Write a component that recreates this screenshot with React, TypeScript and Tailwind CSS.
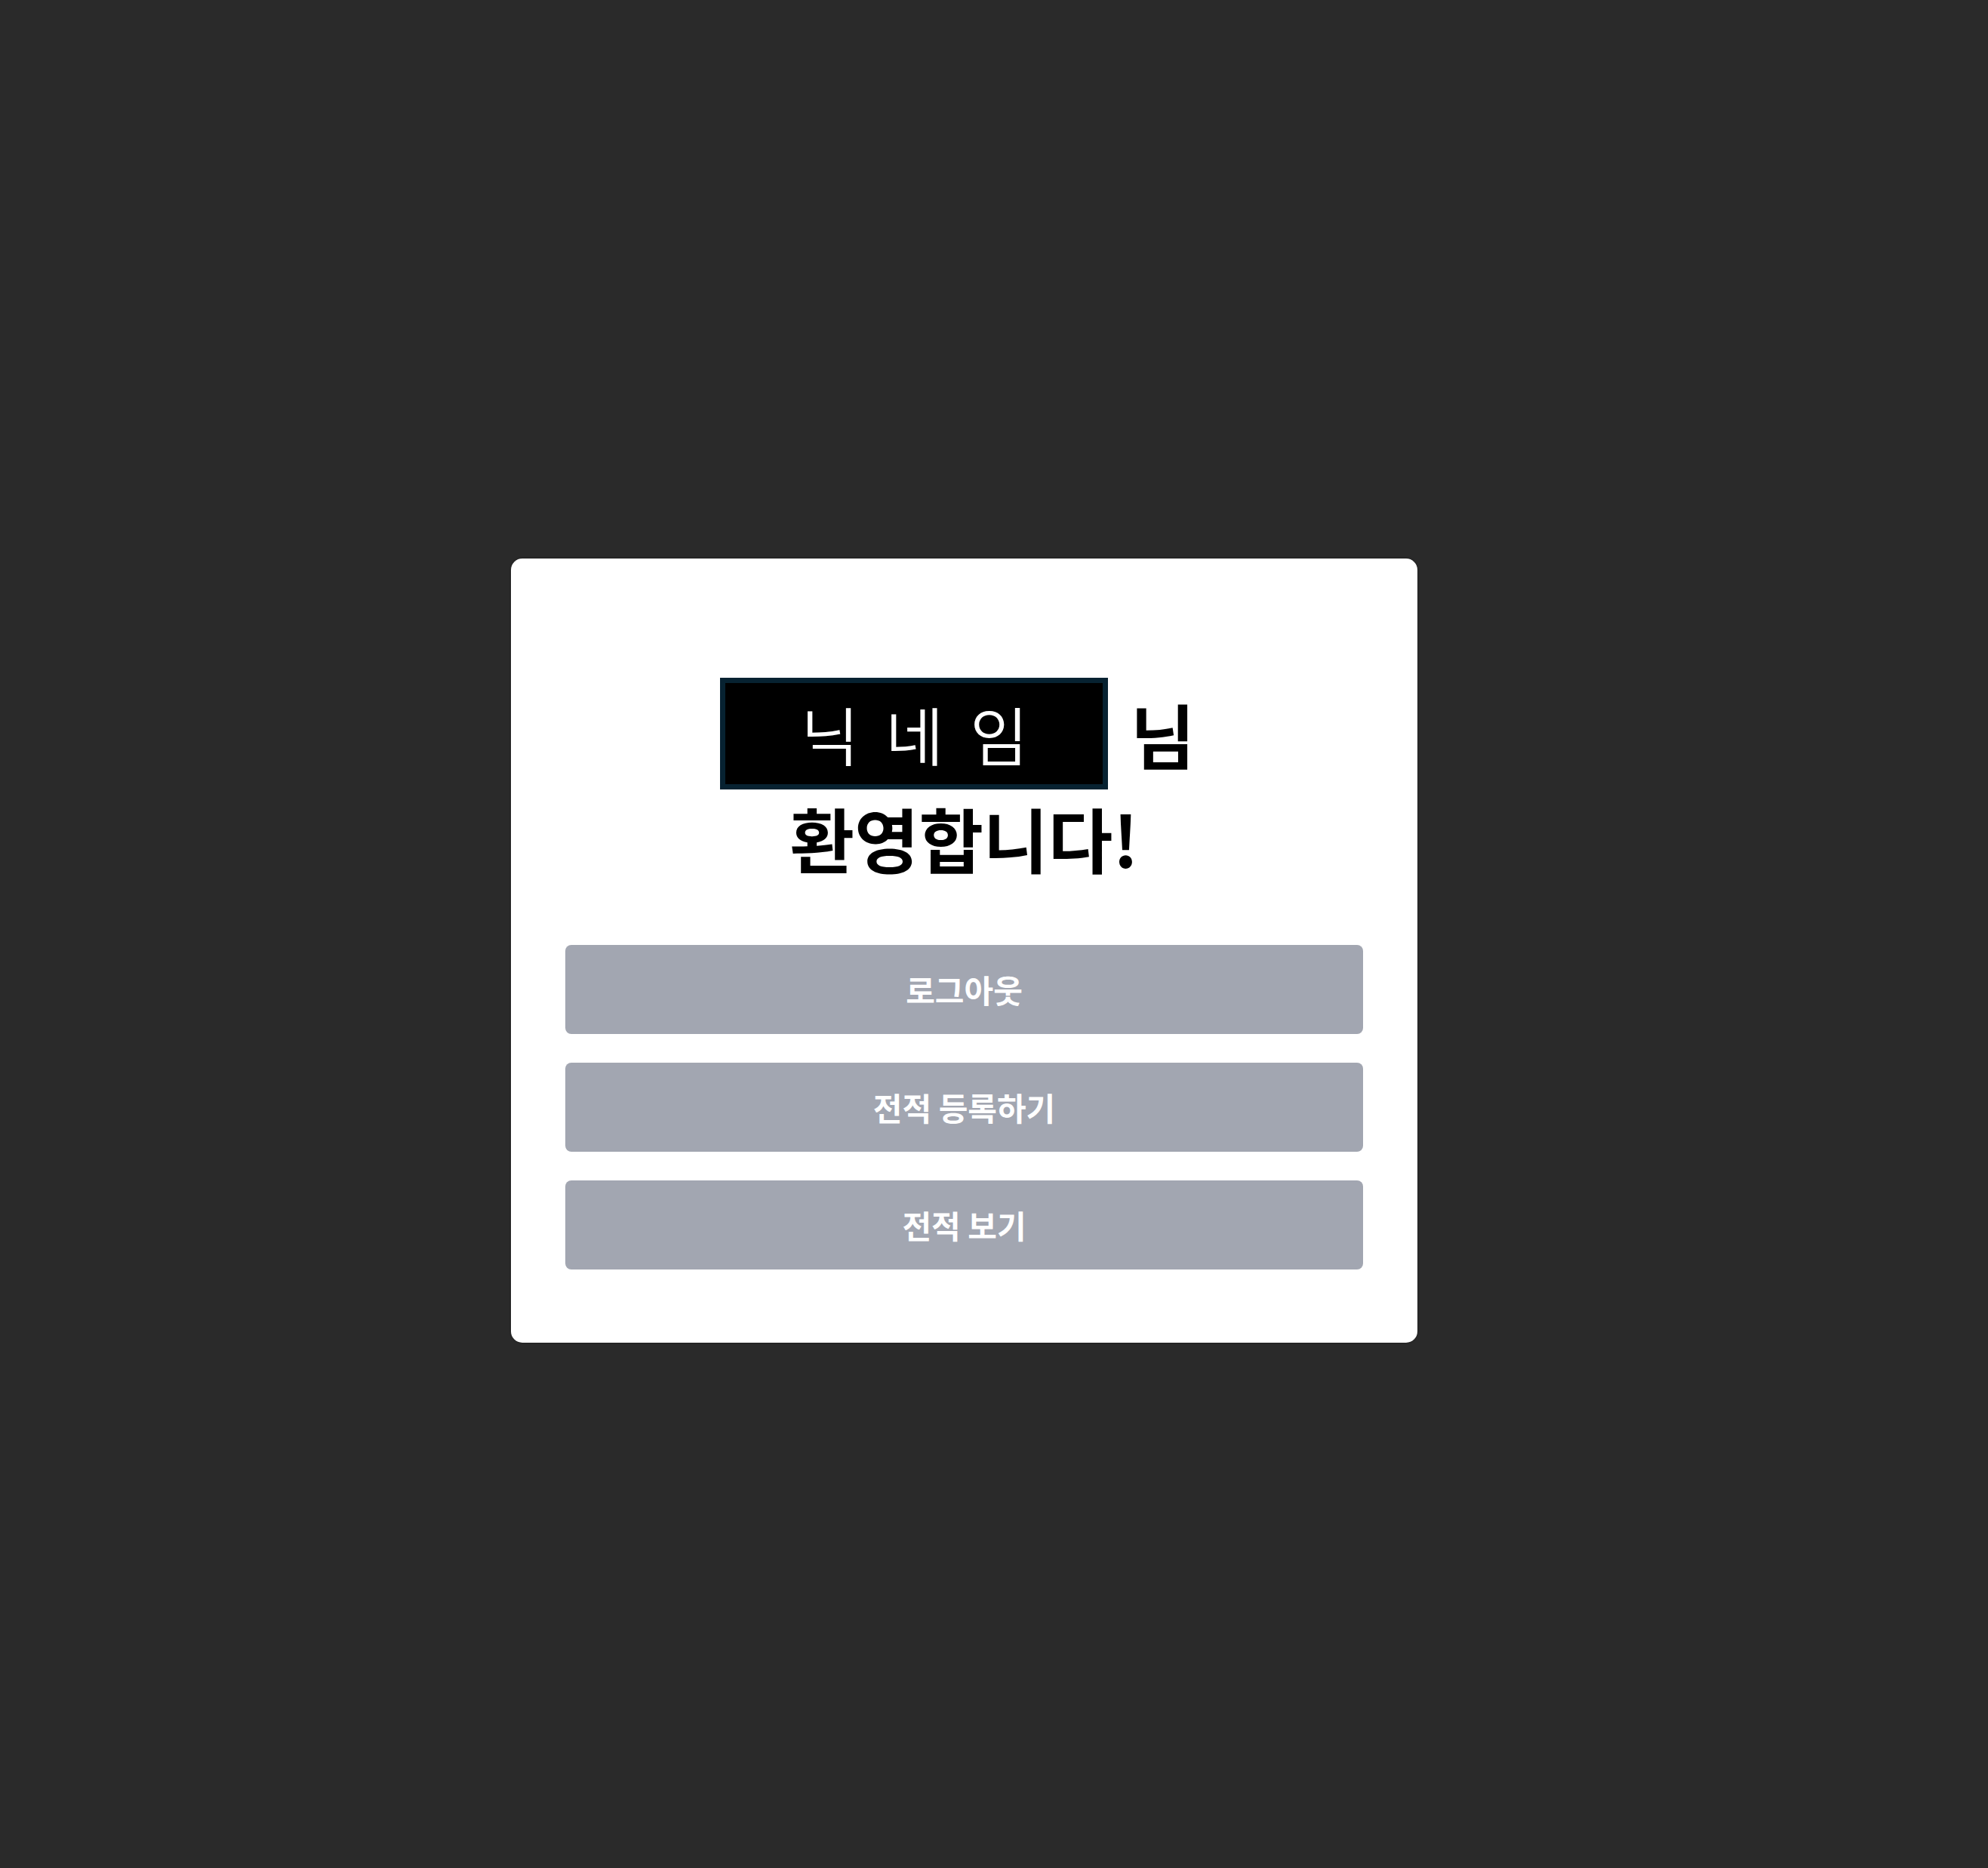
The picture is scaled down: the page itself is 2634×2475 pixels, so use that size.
const actions = ['로그아웃', '전적 등록하기', '전적 보기'];

const WelcomeCard = ({ nickname }: { nickname: string }) => {
  return (
    <div className="w-[1201px] rounded-[15px] bg-white pt-[158px] pb-[97px] px-[72px] shadow-[0_0_3px_rgba(0,0,0,0.4)]">
      <div className="flex items-center justify-center pr-[18px]">
        <div className="flex h-[148px] w-[514px] items-center justify-center border-[7px] border-[#072231] bg-black">
          <span className="pl-[10px] text-[84px] font-[350] leading-none tracking-[8px] text-white">{nickname}</span>
        </div>
        <span className="ml-[30px] text-[93px] font-bold leading-[1.2] text-black">님</span>
      </div>
      <h1 className="mt-[8px] text-center text-[93px] font-bold leading-[1.2] text-black">환영합니다!</h1>

      <div className="mt-[86px] flex flex-col gap-[38px]">
        {actions.map((label) => (
          <button
            key={label}
            className="flex h-[118px] w-full items-center justify-center rounded-lg bg-[#a2a6b1] text-[42px] font-bold text-white"
          >
            {label}
          </button>
        ))}
      </div>
    </div>
  );
};

export default function App() {
  return (
    <div className="min-h-[2475px] bg-[#2a2a2a] pt-[740px] pl-[677px] font-['Noto_Sans_CJK_KR',sans-serif]">
      <WelcomeCard nickname="닉 네 임" />
    </div>
  );
}
